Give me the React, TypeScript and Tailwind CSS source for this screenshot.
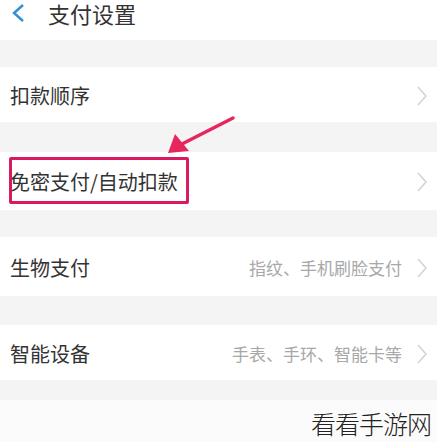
import React from 'react';

const font = { fontFamily: '"Noto Sans CJK SC", "Noto Sans", sans-serif' };

const Chevron = () => (
  <svg width="12" height="22" viewBox="0 0 12 22" className="shrink-0">
    <polyline points="2,2 10,11 2,20" fill="none" stroke="#d2d2d2" strokeWidth="1.5" />
  </svg>
);

interface RowProps {
  title: string;
  hint?: string;
  h: string;
}

const Row = ({ title, hint, h }: RowProps) => (
  <div className={`bg-white flex items-center justify-between pl-[10px] pr-[9px] pt-[2px] ${h}`}>
    <div className="text-[20px] text-[#333] leading-none">{title}</div>
    <div className="flex items-center gap-[14px]">
      {hint && <div className="text-[17px] text-[#a8a8a8] leading-none">{hint}</div>}
      <Chevron />
    </div>
  </div>
);

export default function App() {
  return (
    <div className="w-[437px] h-[442px] bg-[#f4f4f4] overflow-hidden relative" style={font}>
      <div className="bg-white h-[40px] flex items-start pt-[2px]">
        <svg width="20" height="22" viewBox="0 0 20 22" className="ml-[8px]">
          <polyline points="15,3 6,11 15,19" fill="none" stroke="#2f8fd8" strokeWidth="2.4" />
        </svg>
        <div className="ml-[20px] text-[22px] text-[#333] leading-[22px]">支付设置</div>
      </div>
      <div className="h-[27px]" />
      <Row title="扣款顺序" h="h-[55px]" />
      <div className="h-[30px]" />
      <Row title="免密支付/自动扣款" h="h-[58px]" />
      <div className="h-[27px]" />
      <Row title="生物支付" hint="指纹、手机刷脸支付" h="h-[59px]" />
      <div className="h-[29px]" />
      <Row title="智能设备" hint="手表、手环、智能卡等" h="h-[55px]" />
      <div className="h-[20px]" />
      <div className="bg-[#fbfbfb] h-[42px] flex justify-end items-end pr-[6px] pb-[6px]">
        <div className="text-[25px] text-[#222] leading-none tracking-[-1px]" style={{ fontWeight: 300 }}>看看手游网</div>
      </div>

      <div className="absolute left-[9px] top-[157px] w-[180px] h-[47px] border-[3px] border-[#d81b60] rounded-[2px]" />
      <svg className="absolute left-0 top-0" width="437" height="442">
        <line x1="233" y1="118" x2="180" y2="145" stroke="#e8265e" strokeWidth="3.5" strokeLinecap="round" />
        <polygon points="168,153 175,134 189,151" fill="#e8265e" />
      </svg>
    </div>
  );
}
